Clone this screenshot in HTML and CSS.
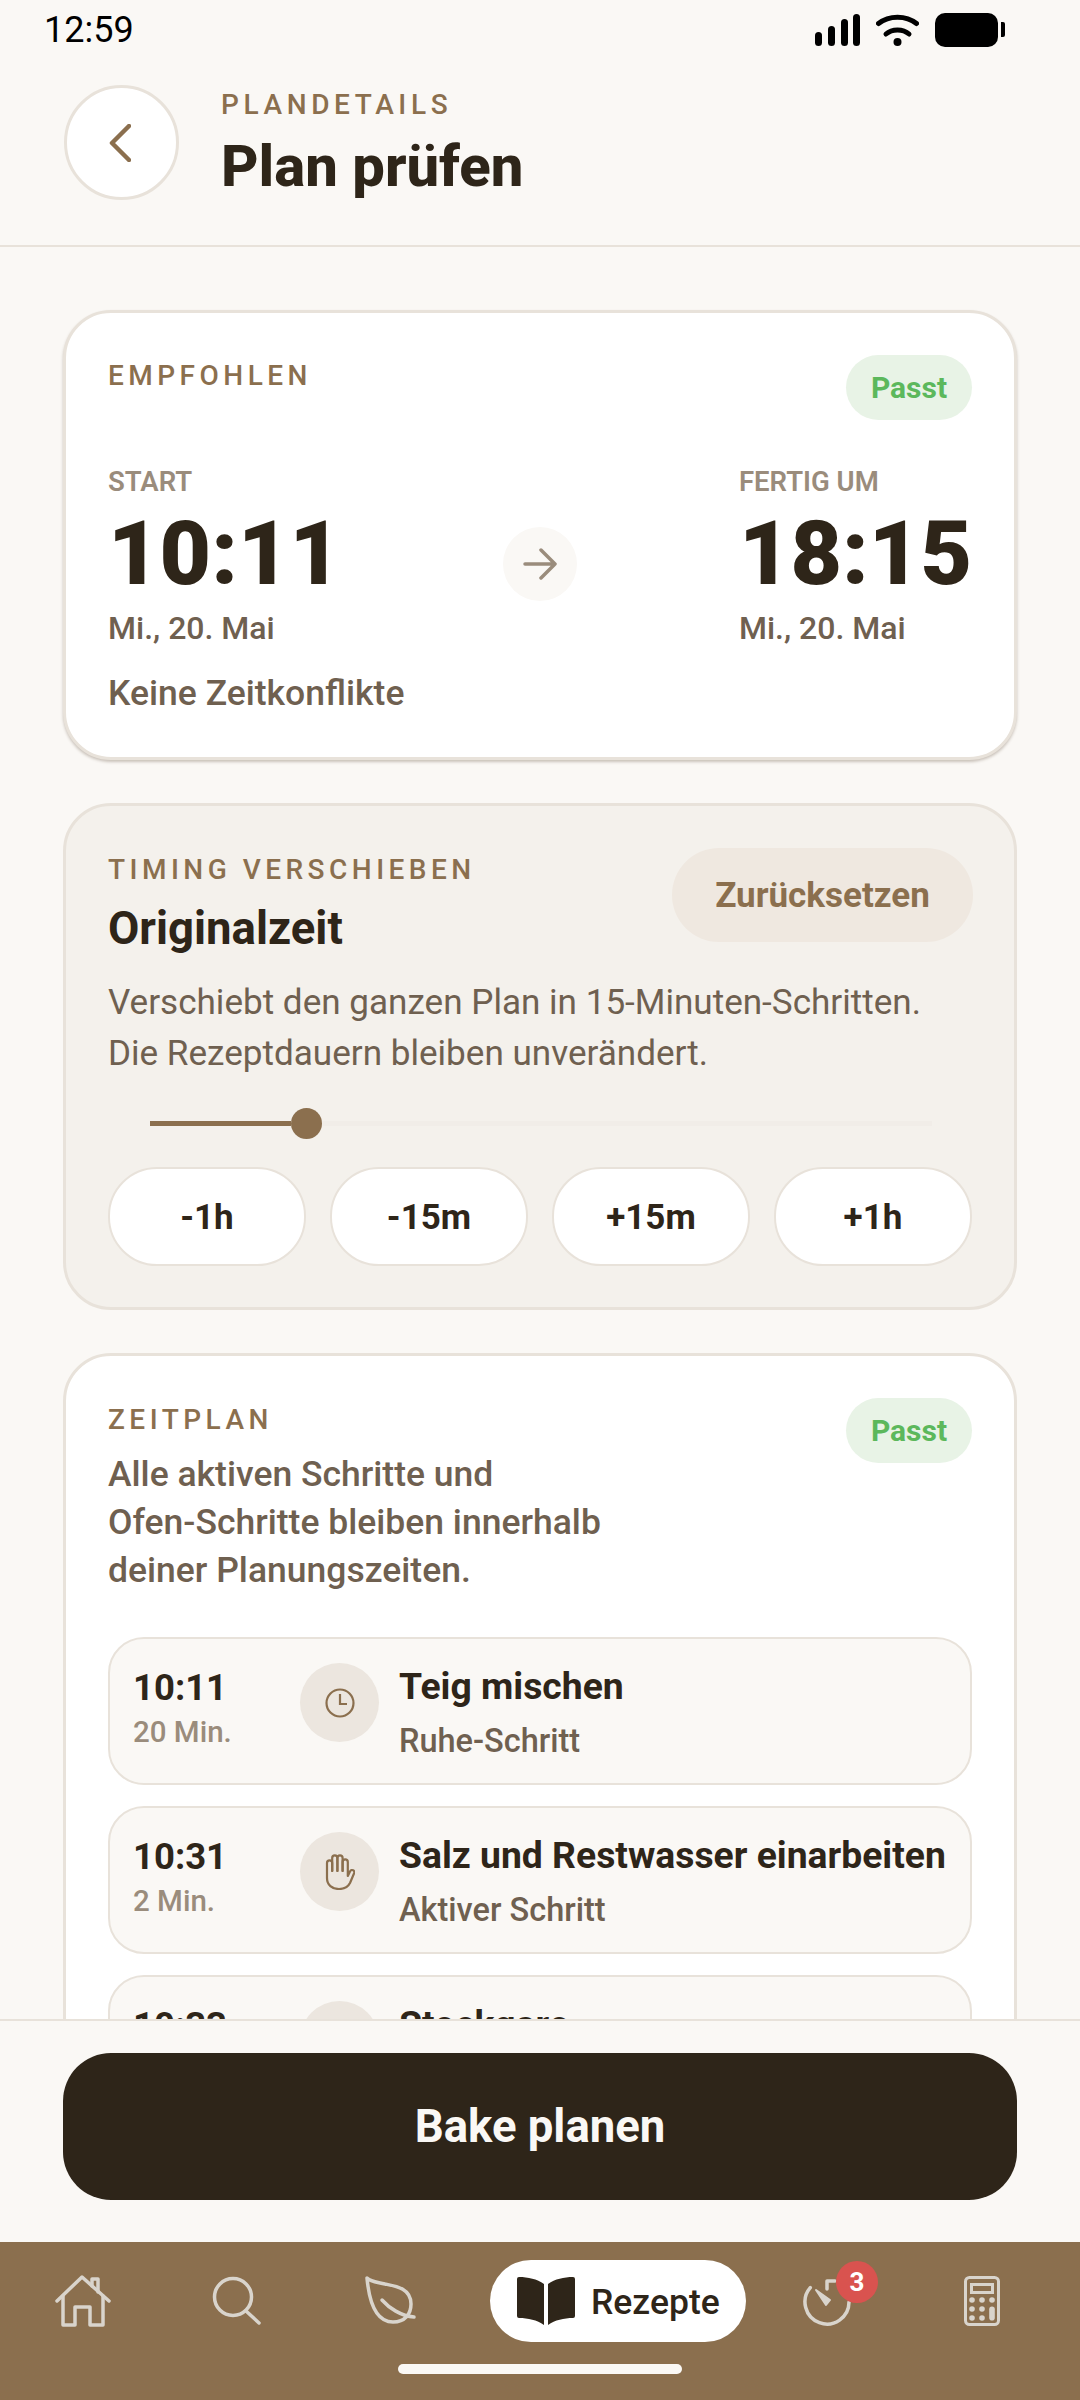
FILE: index.html
```html
<!DOCTYPE html>
<html lang="de">
<head>
    <meta charset="UTF-8">
    <meta name="viewport" content="width=device-width, initial-scale=1.0">
    <title>Plan prüfen</title>
    <link rel="stylesheet" href="styles.css">
</head>
<body>
    <div class="app">
        <div class="status-bar">
            <span class="status-time">12:59</span>
            <div class="status-icons">
                <svg class="icon-signal" width="45" height="32" viewBox="0 0 45 32">
                    <rect x="0" y="18" width="7" height="14" rx="3.5"/>
                    <rect x="13" y="12" width="7" height="20" rx="3.5"/>
                    <rect x="26" y="5" width="7" height="27" rx="3.5"/>
                    <rect x="38" y="0" width="7" height="32" rx="3.5"/>
                </svg>
                <svg class="icon-wifi" width="43" height="32" viewBox="0 0 43 32">
                    <path d="M2.5 9.5 C13 1 30 1 40.5 9.5" fill="none" stroke="#000" stroke-width="5" stroke-linecap="round"/>
                    <path d="M10 20 C16 14.5 27 14.5 33 20" fill="none" stroke="#000" stroke-width="5" stroke-linecap="round"/>
                    <circle cx="21.500" cy="28" r="4"/>
                </svg>
                <svg class="icon-battery" width="70" height="34" viewBox="0 0 70 34">
                    <rect x="0" y="0" width="63" height="34" rx="10"/>
                    <path d="M66 9 H68 Q70 9 70 11 V22 Q70 24 68 24 H66 Z"/>
                </svg>
            </div>
        </div>

        <header class="page-header">
            <button class="back-btn">
                <svg width="22" height="38" viewBox="0 0 22 38"><path d="M20 2 L3 19 L20 36" fill="none" stroke="#8b6f4e" stroke-width="4.500" stroke-linecap="round" stroke-linejoin="round"/></svg>
            </button>
            <div>
                <div class="eyebrow header-eyebrow">PLANDETAILS</div>
                <h1 class="page-title">Plan prüfen</h1>
            </div>
        </header>

        <main class="content">
            <section class="card card-main">
                <div class="card-top">
                    <div class="eyebrow">EMPFOHLEN</div>
                    <span class="pill-ok">Passt</span>
                </div>
                <div class="times">
                    <div>
                        <div class="time-label">START</div>
                        <div class="time-big">10:11</div>
                        <div class="time-date">Mi., 20. Mai</div>
                    </div>
                    <div class="arrow-dot">
                        <svg width="34" height="32" viewBox="0 0 34 32"><path d="M2 16 H32 M18 2 L32 16 L18 30" fill="none" stroke="#9a8c7c" stroke-width="3.500" stroke-linecap="round" stroke-linejoin="round"/></svg>
                    </div>
                    <div>
                        <div class="time-label">FERTIG UM</div>
                        <div class="time-big">18:15</div>
                        <div class="time-date">Mi., 20. Mai</div>
                    </div>
                </div>
                <div class="note">Keine Zeitkonflikte</div>
            </section>

            <section class="card card-timing">
                <div class="card-top">
                    <div>
                        <div class="eyebrow">TIMING VERSCHIEBEN</div>
                        <div class="timing-title">Originalzeit</div>
                    </div>
                    <button class="reset-btn">Zurücksetzen</button>
                </div>
                <p class="timing-text">Verschiebt den ganzen Plan in 15-Minuten-Schritten.<br>Die Rezeptdauern bleiben unverändert.</p>
                <div class="slider">
                    <div class="slider-fill"></div>
                    <div class="slider-thumb"></div>
                    <div class="slider-rest"></div>
                </div>
                <div class="shift-btns">
                    <button class="shift-btn">-1h</button>
                    <button class="shift-btn">-15m</button>
                    <button class="shift-btn">+15m</button>
                    <button class="shift-btn">+1h</button>
                </div>
            </section>

            <section class="card card-plan">
                <div class="card-top">
                    <div>
                        <div class="eyebrow">ZEITPLAN</div>
                        <p class="plan-text">Alle aktiven Schritte und<br>Ofen-Schritte bleiben innerhalb<br>deiner Planungszeiten.</p>
                    </div>
                    <span class="pill-ok">Passt</span>
                </div>
                <div class="steps">
                    <div class="step">
                        <div class="step-time"><strong>10:11</strong><span>20 Min.</span></div>
                        <div class="step-icon">
                            <svg width="30" height="30" viewBox="0 0 30 30"><circle cx="15" cy="15" r="13.500" fill="none" stroke="#8b6f4e" stroke-width="2.200"/><path d="M15 6 V16 H22" fill="none" stroke="#8b6f4e" stroke-width="2.200"/></svg>
                        </div>
                        <div class="step-body"><strong>Teig mischen</strong><span>Ruhe-Schritt</span></div>
                    </div>
                    <div class="step">
                        <div class="step-time"><strong>10:31</strong><span>2 Min.</span></div>
                        <div class="step-icon">
                            <svg width="30" height="36" viewBox="0 0 30 36" fill="none" stroke="#8b6f4e" stroke-width="2.200" stroke-linecap="round" stroke-linejoin="round">
                                <path d="M2 24 V9 a2.600 2.600 0 0 1 5.200 0 V17"/>
                                <path d="M7.200 17 V4 a2.600 2.600 0 0 1 5.200 0 V17"/>
                                <path d="M12.400 17 V4 a2.600 2.600 0 0 1 5.200 0 V17"/>
                                <path d="M17.600 17 V8 a2.600 2.600 0 0 1 5.200 0 V22 L25 17.500 c1.500 -3 5.500 -1 4 2 L25 29 C23 33 19 35 14 35 C7 35 2 31 2 24"/>
                            </svg>
                        </div>
                        <div class="step-body"><strong>Salz und Restwasser einarbeiten</strong><span>Aktiver Schritt</span></div>
                    </div>
                    <div class="step">
                        <div class="step-time"><strong>10:33</strong><span>30 Min.</span></div>
                        <div class="step-icon"></div>
                        <div class="step-body"><strong>Stockgare</strong><span>Ruhe-Schritt</span></div>
                    </div>
                </div>
            </section>
        </main>

        <div class="action-bar">
            <button class="primary-btn">Bake planen</button>
        </div>

        <nav class="tabbar">
            <div class="tab">
                <svg width="56" height="52" viewBox="0 0 56 52" fill="none" stroke="#d9d4cc" stroke-width="3.500" stroke-linecap="round" stroke-linejoin="round">
                    <path d="M2 26 L27 2 L54 26"/>
                    <path d="M8 21 V50 H20 V32 H35 V50 H48 V21"/>
                    <path d="M37 11 V4 H43 V17"/>
                </svg>
            </div>
            <div class="tab">
                <svg width="50" height="50" viewBox="0 0 50 50" fill="none" stroke="#d9d4cc" stroke-width="3.500" stroke-linecap="round">
                    <circle cx="21" cy="21" r="18.500"/>
                    <path d="M34 35 L47 47"/>
                </svg>
            </div>
            <div class="tab">
                <svg width="52" height="50" viewBox="0 0 52 50" fill="none" stroke="#d9d4cc" stroke-width="3.500" stroke-linecap="round" stroke-linejoin="round">
                    <path d="M2 2 C4 24 10 46 28 46 C40 46 46 38 46 28 C46 12 30 10 20 8 C12 6 6 6 2 2 Z"/>
                    <path d="M17 24 C24 32 36 40 49 41"/>
                </svg>
            </div>
            <div class="tab-active">
                <svg width="60" height="50" viewBox="0 0 60 50" fill="#2e2519">
                    <path d="M3 1 C12 1 21 3 28 8 V49 C21 44 12 42 3 42 Q1 42 1 40 V3 Q1 1 3 1 Z"/>
                    <path d="M57 1 C48 1 39 3 32 8 V49 C39 44 48 42 57 42 Q59 42 59 40 V3 Q59 1 57 1 Z"/>
                </svg>
                <span>Rezepte</span>
            </div>
            <div class="tab tab-timer">
                <svg width="50" height="50" viewBox="0 0 50 50" fill="none" stroke="#d9d4cc" stroke-width="3.500" stroke-linecap="round" stroke-linejoin="round">
                    <path d="M7.300 11.700 A22 22 0 1 0 46 26"/>
                    <path d="M24 13 V5 H32"/>
                    <path d="M13 14 L27 24 L23 29 Z" fill="#d9d4cc" stroke-width="2"/>
                </svg>
                <span class="badge">3</span>
            </div>
            <div class="tab">
                <svg width="36" height="50" viewBox="0 0 36 50" fill="none" stroke="#d9d4cc" stroke-width="3">
                    <rect x="1.500" y="1.500" width="33" height="47" rx="4"/>
                    <rect x="7.500" y="8.500" width="21" height="8"/>
                    <g fill="#d9d4cc" stroke="none">
                        <circle cx="8" cy="24" r="2.800"/><circle cx="18" cy="24" r="2.800"/><circle cx="28" cy="24" r="2.800"/>
                        <circle cx="8" cy="33" r="2.800"/><circle cx="18" cy="33" r="2.800"/><rect x="25.200" y="30.500" width="5.600" height="14" rx="2.800"/>
                        <circle cx="8" cy="42" r="2.800"/><circle cx="18" cy="42" r="2.800"/>
                    </g>
                </svg>
            </div>
            <div class="home-bar"></div>
        </nav>
    </div>
</body>
</html>
```
FILE: styles.css
```css
* { box-sizing: border-box; }
body {
    margin: 0;
    font-family: Roboto, "Liberation Sans", sans-serif;
    background: #faf8f5;
    color: #2e2519;
}
button { font-family: inherit; }
p { margin: 0; }

.app {
    width: 1080px;
    height: 2400px;
    display: flex;
    flex-direction: column;
    overflow: hidden;
}

/* status bar */
.status-bar {
    height: 62px;
    padding: 0 75px 2px 44px;
    display: flex;
    align-items: center;
    justify-content: space-between;
    flex-shrink: 0;
}
.status-time { font-size: 36px; color: #000; }
.status-icons { display: flex; align-items: center; gap: 16px; }

/* header */
.page-header {
    height: 185px;
    padding: 23px 64px 0;
    display: flex;
    align-items: flex-start;
    gap: 42px;
    border-bottom: 2px solid #e8e2da;
    flex-shrink: 0;
}
.back-btn {
    width: 115px;
    height: 115px;
    border-radius: 50%;
    background: #fff;
    border: 3px solid #e8e2da;
    display: flex;
    align-items: center;
    justify-content: center;
    padding: 0 3px 0 0;
}
.eyebrow {
    font-size: 28px;
    font-weight: 500;
    line-height: 32px;
    letter-spacing: 0.16em;
    color: #8b6f4e;
}
.header-eyebrow { margin-top: 4px; letter-spacing: 0.165em; }
.page-title {
    margin: 10px 0 0;
    font-size: 58px;
    font-weight: 800;
    line-height: 70px;
}

/* cards */
.content {
    flex: 1;
    min-height: 0;
    overflow: hidden;
    padding: 63px 63px 0;
    display: flex;
    flex-direction: column;
    gap: 43px;
}
.card {
    flex-shrink: 0;
    border: 3px solid #e8e2da;
    border-radius: 48px;
    background: #fff;
    padding: 42px;
}
.card-main {
    height: 450px;
    box-shadow: 0 2px 3px rgba(90, 70, 50, 0.3);
}
.card-top {
    display: flex;
    justify-content: space-between;
    align-items: flex-start;
}
.card-main .eyebrow { margin-top: 5px; }
.pill-ok {
    width: 126px;
    height: 65px;
    border-radius: 33px;
    background: #e8f3e6;
    color: #5cb85c;
    font-size: 30px;
    font-weight: 700;
    display: flex;
    align-items: center;
    justify-content: center;
}

.times {
    margin-top: 47px;
    display: flex;
    justify-content: space-between;
    align-items: center;
}
.time-label {
    font-size: 27.500px;
    font-weight: 600;
    line-height: 30px;
    color: #9a8c7c;
}
.time-big {
    font-size: 89px;
    font-weight: 900;
    line-height: 100px;
    margin-top: 7px;
}
.time-date {
    font-size: 32px;
    font-weight: 500;
    line-height: 36px;
    color: #6f6050;
    margin-top: 6px;
}
.arrow-dot {
    width: 74px;
    height: 74px;
    margin-top: 14px;
    border-radius: 50%;
    background: #faf8f5;
    display: flex;
    align-items: center;
    justify-content: center;
}
.note {
    margin-top: 27px;
    font-size: 35.500px;
    font-weight: 500;
    line-height: 40px;
    color: #6f6050;
}

/* timing */
.card-timing {
    height: 507px;
    background: #f4f1ec;
}
.card-timing .eyebrow { margin-top: 6px; }
.timing-title {
    font-size: 45.500px;
    font-weight: 700;
    line-height: 52px;
    margin-top: 17px;
}
.reset-btn {
    width: 301px;
    height: 94px;
    margin-right: -1px;
    border: none;
    border-radius: 47px;
    background: #efe8e0;
    color: #8b6f4e;
    font-size: 35px;
    font-weight: 700;
}
.timing-text {
    margin-top: 22px;
    font-size: 35.100px;
    line-height: 51px;
    color: #6f6050;
}
.slider {
    margin: 28px 40px 0 42px;
    height: 32px;
    display: flex;
    align-items: center;
}
.slider-fill {
    width: 141px;
    height: 5px;
    background: #8b6f4e;
}
.slider-thumb {
    width: 31px;
    height: 31px;
    border-radius: 50%;
    background: #8b6f4e;
    flex-shrink: 0;
}
.slider-rest {
    flex: 1;
    height: 5px;
    background: #f1ede8;
}
.shift-btns {
    margin-top: 28px;
    display: grid;
    grid-template-columns: repeat(4, 1fr);
    gap: 24px;
}
.shift-btn {
    height: 99px;
    padding-top: 2px;
    border: 2px solid #e8e2da;
    border-radius: 49px;
    background: #fff;
    color: #2e2519;
    font-size: 35px;
    font-weight: 700;
}

/* schedule */
.card-plan { padding-bottom: 0; }
.card-plan .eyebrow { margin-top: 6px; }
.plan-text {
    margin-top: 14px;
    font-size: 35.500px;
    font-weight: 500;
    line-height: 48px;
    color: #6f6050;
}
.steps {
    margin-top: 43px;
    display: flex;
    flex-direction: column;
    gap: 21px;
}
.step {
    height: 148px;
    padding: 24px 0 0 23px;
    display: flex;
    align-items: flex-start;
    border: 2px solid #e8e2da;
    border-radius: 36px;
    background: #faf8f5;
}
.step-time {
    width: 167px;
    margin-top: 3px;
    display: flex;
    flex-direction: column;
}
.step-time strong {
    font-size: 36.500px;
    font-weight: 700;
    line-height: 44px;
}
.step-time span {
    font-size: 29.500px;
    font-weight: 500;
    line-height: 34px;
    color: #9a8c7c;
    margin-top: 5px;
}
.step-icon {
    width: 79px;
    height: 79px;
    border-radius: 50%;
    background: #ece6df;
    flex-shrink: 0;
    display: flex;
    align-items: center;
    justify-content: center;
}
.step-body {
    margin: 1px 0 0 20px;
    display: flex;
    flex-direction: column;
}
.step-body strong {
    font-size: 37.300px;
    font-weight: 700;
    line-height: 44px;
}
.step-body span {
    margin-top: 15px;
    font-size: 32.500px;
    font-weight: 500;
    line-height: 36px;
    color: #6f6050;
}

/* bottom action */
.action-bar {
    height: 223px;
    padding: 32px 63px 0;
    border-top: 2px solid #e8e2da;
    background: #faf8f5;
    flex-shrink: 0;
}
.primary-btn {
    width: 100%;
    height: 147px;
    border: none;
    border-radius: 48px;
    background: #2e2519;
    color: #faf8f5;
    font-size: 45.500px;
    font-weight: 700;
}

/* tab bar */
.tabbar {
    position: relative;
    height: 158px;
    padding: 18px 0 0 28px;
    display: flex;
    align-items: flex-start;
    gap: 44px;
    background: #8b6f4e;
    flex-shrink: 0;
}
.tab {
    position: relative;
    width: 110px;
    height: 82px;
    display: flex;
    align-items: center;
    justify-content: center;
}
.tab-active {
    width: 256px;
    height: 82px;
    padding-left: 26px;
    border-radius: 41px;
    background: #fff;
    display: flex;
    align-items: center;
    gap: 15px;
    font-size: 35.500px;
    font-weight: 500;
    color: #2e2519;
}
.tab-active span { margin-top: 2px; }
.tab-timer { margin-left: -17px; }
.badge {
    position: absolute;
    top: 1px;
    left: 63px;
    width: 42px;
    height: 42px;
    border-radius: 50%;
    background: #d9534f;
    color: #fff;
    font-size: 26px;
    font-weight: 700;
    display: flex;
    align-items: center;
    justify-content: center;
}
.home-bar {
    position: absolute;
    left: 398px;
    bottom: 26px;
    width: 284px;
    height: 10px;
    border-radius: 5px;
    background: #faf8f5;
}
```
